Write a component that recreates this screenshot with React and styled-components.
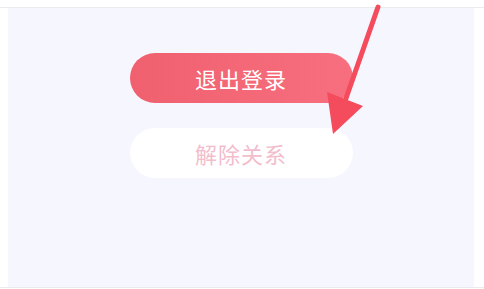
import React from 'react';
import styled, { createGlobalStyle } from 'styled-components';

const GlobalStyle = createGlobalStyle`
  html, body {
    margin: 0;
    padding: 0;
    background: #ffffff;
    font-family: "Noto Sans CJK SC", "Noto Sans", sans-serif;
  }
`;

const Page = styled.div`
  position: relative;
  width: 484px;
  height: 289px;
  padding-top: 7px;
  box-sizing: border-box;
  overflow: hidden;
`;

const Frame = styled.div`
  border-top: 1px solid #ebebef;
  border-bottom: 1px solid #ebebef;
  height: 279px;
  padding: 0 10px 0 8px;
`;

const Panel = styled.div`
  height: 100%;
  background: #f6f6fe;
  display: flex;
  flex-direction: column;
  align-items: center;
  gap: 25px;
  padding-top: 45px;
  box-sizing: border-box;
`;

const PillButton = styled.button`
  width: 223px;
  height: 50px;
  border: none;
  border-radius: 25px;
  font-family: inherit;
  font-size: 22px;
  font-weight: 400;
  letter-spacing: 1px;
  display: flex;
  align-items: center;
  justify-content: center;
  padding: 0;
  background: ${p => (p.$primary ? 'linear-gradient(90deg, #f0606f, #f76f7f)' : '#ffffff')};
  color: ${p => (p.$primary ? '#ffffff' : '#f2bdcc')};
`;

const Annotation = styled.svg`
  position: absolute;
  left: 0;
  top: 0;
  pointer-events: none;
`;

export default function App() {
  return (
    <>
      <GlobalStyle />
      <Page>
        <Frame>
          <Panel>
            <PillButton $primary>退出登录</PillButton>
            <PillButton>解除关系</PillButton>
          </Panel>
        </Frame>
        <Annotation width="484" height="289" viewBox="0 0 484 289">
          <line x1="378" y1="7" x2="344" y2="104" stroke="#f44c5d" strokeWidth="5" strokeLinecap="round" />
          <polygon points="327,92 363,106 333,134" fill="#f44c5d" />
        </Annotation>
      </Page>
    </>
  );
}
